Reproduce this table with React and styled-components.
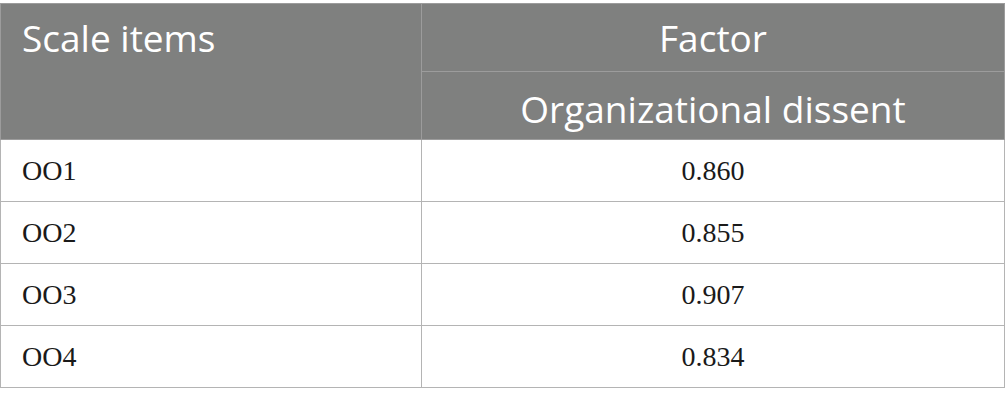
import React from "react";
import styled, { createGlobalStyle } from "styled-components";

const rows = [
    { item: "OO1", value: "0.860" },
    { item: "OO2", value: "0.855" },
    { item: "OO3", value: "0.907" },
    { item: "OO4", value: "0.834" },
];

export default function App() {
    return (
        <>
            <GlobalStyle />
            <Page>
                <Table>
                    <colgroup>
                        <col style={{ width: "421px" }} />
                        <col />
                    </colgroup>
                    <thead>
                        <tr>
                            <HeadCell rowSpan={2}>Scale items</HeadCell>
                            <HeadCell center>Factor</HeadCell>
                        </tr>
                        <tr>
                            <HeadCell center offset={12}>Organizational dissent</HeadCell>
                        </tr>
                    </thead>
                    <tbody>
                        {rows.map((row) => (
                            <tr key={row.item}>
                                <Cell>{row.item}</Cell>
                                <Cell center>{row.value}</Cell>
                            </tr>
                        ))}
                    </tbody>
                </Table>
            </Page>
        </>
    );
}

const GlobalStyle = createGlobalStyle`
    body {
        margin: 0;
        background: #ffffff;
    }
`
const Page = styled.div`
    padding-top: 3px;
    width: 1005px;
`
const Table = styled.table`
    width: 1005px;
    border-collapse: collapse;
    table-layout: fixed;
    border: 1px solid #a8a8a8;
`
const HeadCell = styled.th`
    background-color: #7f807f;
    color: #ffffff;
    font-family: "Open Sans", sans-serif;
    font-weight: 400;
    font-size: 37px;
    line-height: 50px;
    height: 68px;
    padding: ${({ offset }) => offset || 9}px 0 0 ${({ center }) => (center ? "0" : "21px")};
    text-align: ${({ center }) => (center ? "center" : "left")};
    vertical-align: top;
    border: 1px solid #9c9c9c;
    box-sizing: border-box;
`
const Cell = styled.td`
    color: #1a1a1a;
    font-family: "Liberation Serif", serif;
    font-size: 28px;
    height: 62px;
    padding: 0 0 0 ${({ center }) => (center ? "0" : "21px")};
    text-align: ${({ center }) => (center ? "center" : "left")};
    vertical-align: middle;
    border: 1px solid #b4b4b4;
    box-sizing: border-box;
`
